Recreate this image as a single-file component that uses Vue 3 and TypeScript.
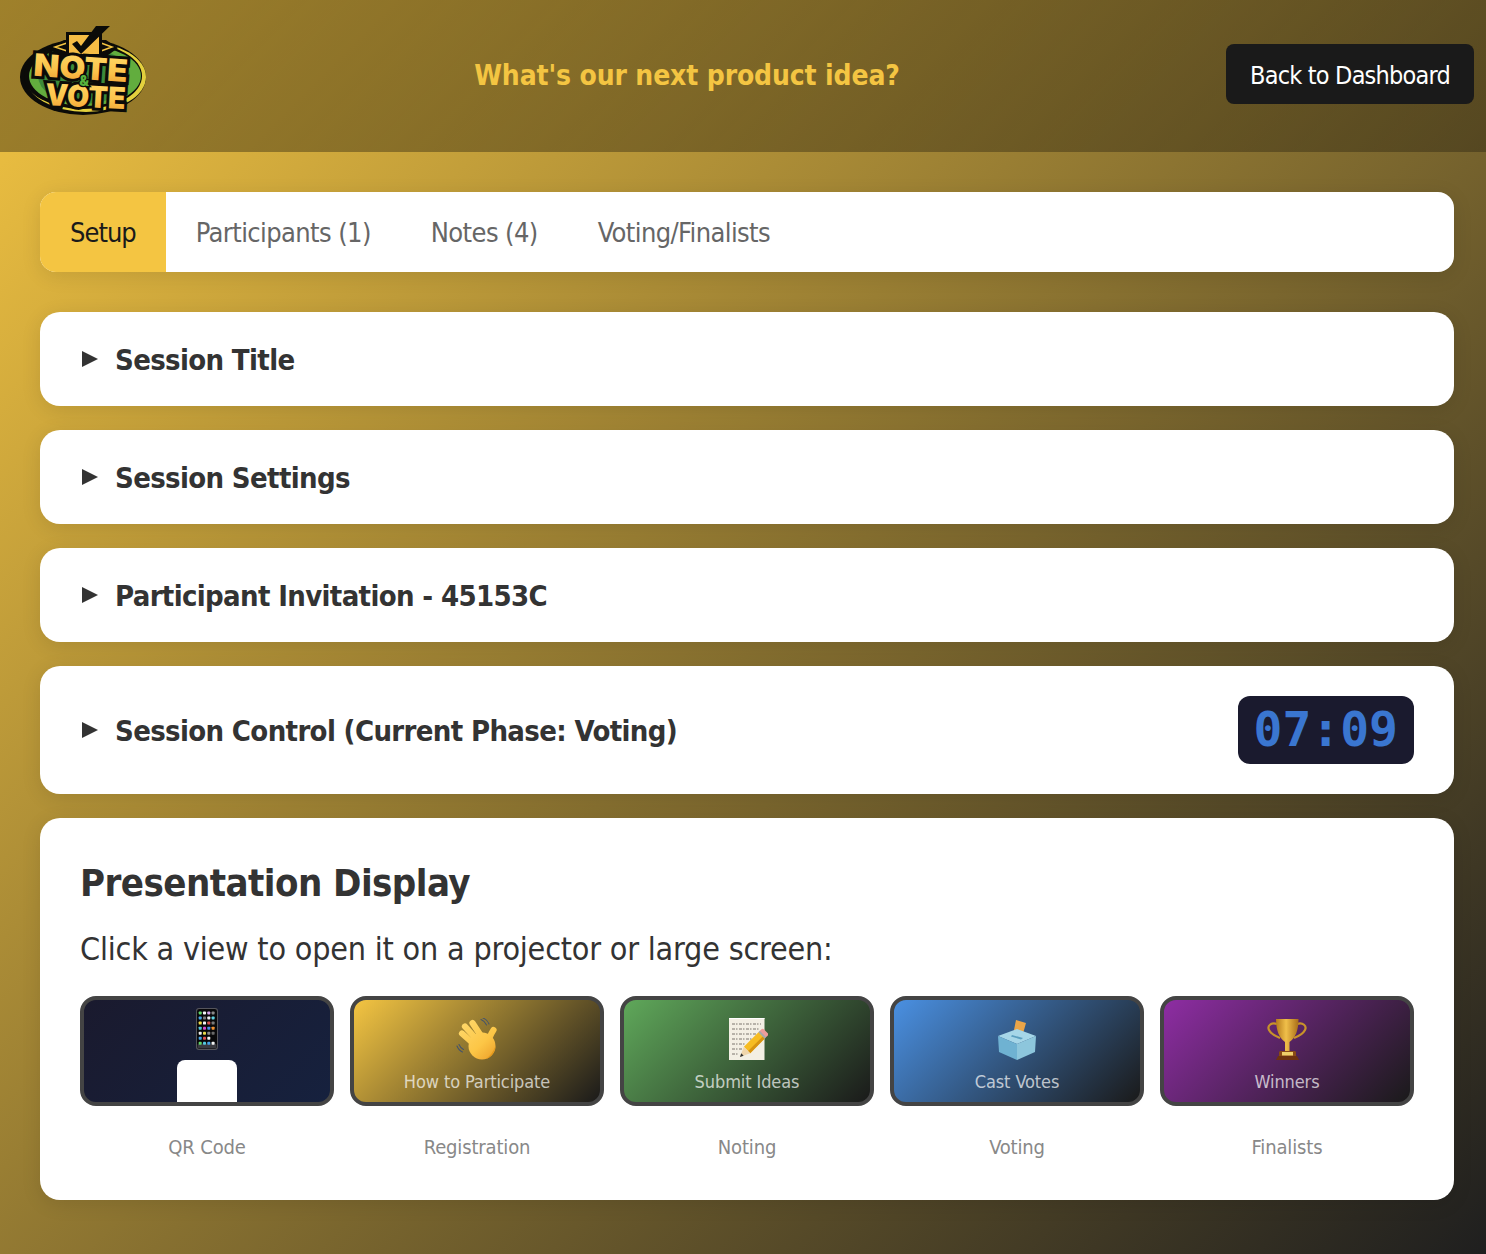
<template>
  <div class="page">
    <header class="topbar">
      <svg class="logo" viewBox="0 0 128 90" width="128" height="90" aria-label="Note and Vote">
        <defs>
          <linearGradient id="gold" x1="0" y1="0" x2="0" y2="1">
            <stop offset="0" stop-color="#ffdc6a" />
            <stop offset="0.6" stop-color="#fbc24a" />
            <stop offset="1" stop-color="#ee9a30" />
          </linearGradient>
        </defs>
        <ellipse cx="63" cy="51" rx="63" ry="38" fill="#0b0b08" />
        <ellipse cx="66" cy="51" rx="60" ry="35" fill="#e3d03d" />
        <ellipse cx="63" cy="50" rx="59" ry="33" fill="#0b0b08" />
        <ellipse cx="65" cy="50" rx="56" ry="30" fill="#62ad3e" />
        <ellipse cx="64" cy="50" rx="46" ry="28" fill="#3c8a3a" />
        <path d="M28 22 L44 14 L86 14 L98 22 L84 32 L42 32 Z" fill="#0b0b08" />
        <path d="M47 17 L35 21 L47 25 M81 17 L92 21 L81 25" fill="none" stroke="#f4c542" stroke-width="1.500" />
        <rect x="46" y="6" width="36" height="22" fill="#0b0b08" />
        <rect x="49" y="9" width="30" height="19" fill="#f6bd45" />
        <path d="M52 18 L57 15 L61 20 L76 0 L90 0 L61 28 Z" fill="#0b0b08" />
        <g font-family="Inter, 'DejaVu Sans', sans-serif" font-weight="900" text-anchor="middle" paint-order="stroke" stroke="#0b0b08" stroke-linejoin="miter">
          <text x="60" y="53" font-size="31" textLength="94" lengthAdjust="spacingAndGlyphs" fill="url(#gold)" stroke-width="6" transform="rotate(4 60 53)">NOTE</text>
          <text x="65" y="81" font-size="30" textLength="80" lengthAdjust="spacingAndGlyphs" fill="url(#gold)" stroke-width="6" transform="rotate(3 65 81)">VOTE</text>
          <text x="64" y="60" font-size="14" fill="#56b23c" stroke-width="2.500">&amp;</text>
        </g>
      </svg>
      <h1 class="session-name">What's our next product idea?</h1>
      <button class="back-btn">Back to Dashboard</button>
    </header>

    <main class="content">
      <nav class="tabs">
        <button
          v-for="(tab, i) in tabs"
          :key="tab"
          class="tab"
          :class="{ active: i === 0 }"
        >
          {{ tab }}
        </button>
      </nav>

      <div class="stack">
        <details v-for="s in sections" :key="s" class="card">
          <summary class="card-head"><span class="arrow"></span><h3>{{ s }}</h3></summary>
        </details>

        <details class="card">
          <summary class="card-head control">
            <span class="arrow"></span>
            <h3>Session Control (Current Phase: Voting)</h3>
            <span class="timer">07:09</span>
          </summary>
        </details>

        <section class="card display">
          <h2>Presentation Display</h2>
          <p>Click a view to open it on a projector or large screen:</p>
          <div class="views">
            <div v-for="v in views" :key="v.phase" class="view">
              <div class="thumb" :class="v.kind">
                <svg v-if="v.kind === 'qr'" class="emoji" viewBox="0 0 42 42">
                  <rect x="10" y="0" width="22" height="42" rx="3" fill="#55555c" />
                  <rect x="11" y="1" width="20" height="40" rx="2.400" fill="#08080a" />
                  <rect x="11.500" y="35.500" width="19" height="5" rx="1.500" fill="#3a3a40" />
                  <rect
                    v-for="(c, n) in phoneCells"
                    :key="n"
                    :x="c.x"
                    :y="c.y"
                    width="3"
                    height="3"
                    rx="0.700"
                    :fill="c.fill"
                  />
                </svg>
                <svg v-else-if="v.kind === 'hand'" class="emoji" viewBox="0 0 42 42">
                  <defs>
                    <linearGradient id="skin" gradientUnits="userSpaceOnUse" x1="6" y1="6" x2="38" y2="40">
                      <stop offset="0" stop-color="#ffd768" />
                      <stop offset="0.6" stop-color="#fcc646" />
                      <stop offset="1" stop-color="#eda22c" />
                    </linearGradient>
                  </defs>
                  <path d="M25 1.500c2.500 1 4.500 3 5.500 5.500M27 0c2.500 1 5 3 6 6M1 28c1 2.500 3 5 5.500 6M3 26.500c1 2.500 2.500 4 4.500 5" fill="none" stroke="#46546a" stroke-width="1.100" stroke-linecap="round" />
                  <g stroke="url(#skin)" stroke-width="6.200" stroke-linecap="round" fill="none">
                    <path d="M6 15.500 L19 27" />
                    <path d="M9 8.500 L22 23" />
                    <path d="M16.500 5 L27 21" />
                    <path d="M30 27 C33 22 34 17 37.500 12" />
                  </g>
                  <circle cx="26" cy="28" r="13.500" fill="url(#skin)" />
                  <path d="M30 41 C35 39.500 39 35 39.500 28 C37 34 34 38 30 41 Z" fill="#e59a1c" />
                </svg>
                <svg v-else-if="v.kind === 'memo'" class="emoji" viewBox="0 0 42 42">
                  <rect x="3" y="0" width="35.500" height="42" fill="#f3efe4" />
                  <path d="M3 0h35.500v1H3z" fill="#fff" />
                  <g fill="none" stroke="#5a574f" stroke-width="0.800" stroke-dasharray="3 1 1.500 1.500">
                    <path d="M6 6h29M6 11h27M6 16h24M6 21h20M6 26h13M6 31h10M6 36h7" />
                  </g>
                  <g transform="rotate(45 26 27)">
                    <rect x="21.500" y="13" width="9" height="21" fill="#f6bc22" />
                    <rect x="27.500" y="13" width="3" height="21" fill="#d79412" />
                    <rect x="21.500" y="7.500" width="9" height="5.500" rx="2" fill="#ee9c9a" />
                    <rect x="21.500" y="11.500" width="9" height="2" fill="#a9a9a9" />
                    <path d="M21.500 34 H30.500 L26 44 Z" fill="#f0d6ac" />
                    <path d="M24.300 40.500 H27.700 L26 44 Z" fill="#333" />
                  </g>
                </svg>
                <svg v-else-if="v.kind === 'ballot'" class="emoji" viewBox="0 0 42 42">
                  <path d="M20 2 L30 5 L26 19 L17 17 Z" fill="#eba548" />
                  <path d="M21 11 L40 18 L21 26 L2 18 Z" fill="#a6d6e8" />
                  <path d="M2 18 L21 26 V42 L3 34 Z" fill="#6fb2d2" />
                  <path d="M40 18 L21 26 V42 L39 34 Z" fill="#8dc6dc" />
                  <path d="M16 17 L27 20 L25 21.500 L15 18.500 Z" fill="#5b9fc0" />
                </svg>
                <svg v-else class="emoji" viewBox="0 0 42 42">
                  <defs>
                    <linearGradient id="cup" x1="0" y1="0" x2="1" y2="0">
                      <stop offset="0" stop-color="#b57a1c" />
                      <stop offset="0.45" stop-color="#f0bf4a" />
                      <stop offset="1" stop-color="#a96d18" />
                    </linearGradient>
                  </defs>
                  <path d="M11 6C5 4 1 8 3 12c2 4 6 6 11 8M31 6c6-2 10 2 8 6-2 4-6 6-11 8" fill="none" stroke="#c8922a" stroke-width="2.200" />
                  <path d="M10 1h22.500c0 11-3 19-9 23v9h-4.500v-9C13 20 10 12 10 1z" fill="url(#cup)" />
                  <path d="M14 33h15l1 1v4H13v-4z" fill="#8a4a16" />
                  <rect x="16" y="34" width="11" height="3.500" fill="#f0cf6a" />
                  <path d="M12 38h19l2 4H10z" fill="#6e3210" />
                </svg>
                <div v-if="v.kind === 'qr'" class="qr-box"></div>
                <span v-else class="thumb-label">{{ v.label }}</span>
              </div>
              <div class="phase">{{ v.phase }}</div>
            </div>
          </div>
        </section>
      </div>
    </main>
  </div>
</template>

<script setup lang="ts">
const tabs = ["Setup", "Participants (1)", "Notes (4)", "Voting/Finalists"];

const sections = ["Session Title", "Session Settings", "Participant Invitation - 45153C"];

const views = [
  { kind: "qr", label: "", phase: "QR Code" },
  { kind: "hand", label: "How to Participate", phase: "Registration" },
  { kind: "memo", label: "Submit Ideas", phase: "Noting" },
  { kind: "ballot", label: "Cast Votes", phase: "Voting" },
  { kind: "trophy", label: "Winners", phase: "Finalists" },
];

// app grid on the phone emoji, row by row, last row is the dock
const cellRows = [
  ["#62d66a", "#f2f2f2", "#d6a4ec", "#8a8a8a"],
  ["#45a5ea", "#777777", "#eeeeee", "#5bd0e0"],
  ["#f2dc4c", "#f2f2f2", "#d85050", "#7a7a7a"],
  ["#54c8e0", "#d846c8", "#4a8fe8", "#f09030"],
  ["#eeeeee", "#e8d84a", "#8a8a8a", "#6a6a6a"],
  ["#45a5ea", "#e05050", "#f2f2f2", "#08080a"],
  ["#62d66a", "#54c8e0", "#45a5ea", "#f2f2f2"],
];
const phoneCells = cellRows.flatMap((row, r) =>
  row.map((fill, c) => ({ x: 12.700 + c * 4.300, y: 3.500 + r * 5.050, fill })),
);
</script>

<style>
html,
body {
  margin: 0;
}
</style>

<style scoped>
.page {
  min-height: 1254px;
  background: linear-gradient(135deg, #f4c542 0%, #1f1f1f 100%);
  font-family: "DejaVu Sans Condensed", "DejaVu Sans", sans-serif;
  font-stretch: condensed;
  color: #333;
}

.topbar {
  height: 152px;
  box-sizing: border-box;
  padding: 0 12px 4px 20px;
  display: flex;
  align-items: center;
  justify-content: space-between;
  background: linear-gradient(135deg, rgba(0, 0, 0, 0.35), rgba(0, 0, 0, 0.27));
}

.logo {
  display: block;
  margin-top: -6px;
  overflow: visible;
}

.session-name {
  margin: 3px 0 0;
  font-size: 28px;
  letter-spacing: -0.14px;
  font-weight: 700;
  color: #f4c542;
}

.back-btn {
  width: 248px;
  height: 60px;
  padding: 2px 0 0;
  border: 0;
  border-radius: 8px;
  background: #1a1a1a;
  color: #fff;
  font: inherit;
  font-size: 25px;
  letter-spacing: -0.8px;
}

.content {
  padding: 40px 32px 40px 40px;
}

.tabs {
  display: flex;
  height: 80px;
  margin-bottom: 40px;
  background: #fff;
  border-radius: 16px;
  overflow: hidden;
  box-shadow: 0 4px 20px rgba(0, 0, 0, 0.1);
}

.tab {
  padding: 0 30px;
  border: 0;
  background: none;
  color: #666;
  font: inherit;
  font-size: 27px;
  letter-spacing: -0.6px;
}

.tab.active {
  background: #f4c542;
  color: #1a1a1a;
  letter-spacing: -1px;
}

.stack {
  display: flex;
  flex-direction: column;
  gap: 24px;
}

.card {
  background: #fff;
  border-radius: 20px;
  box-shadow: 0 4px 20px rgba(0, 0, 0, 0.1);
}

.card-head {
  display: flex;
  align-items: center;
  height: 94px;
  padding: 0 40px;
  list-style: none;
}

.card-head.control {
  height: 128px;
}

.arrow {
  width: 0;
  height: 0;
  margin: 0 17px 0 2px;
  border-style: solid;
  border-width: 8px 0 8px 16px;
  border-color: transparent transparent transparent #333;
}

.card-head h3 {
  margin: 2px 0 0;
  font-size: 29px;
  letter-spacing: -0.65px;
  font-weight: 700;
  color: #333;
}

.timer {
  margin-left: auto;
  padding: 0 16px;
  height: 68px;
  line-height: 66px;
  border-radius: 12px;
  background: #1a1a2e;
  color: #3a76d0;
  font-family: "DejaVu Sans Mono", monospace;
  font-stretch: normal;
  font-size: 48px;
  font-weight: 700;
}

.display {
  padding: 40px;
}

.display h2 {
  margin: 1px 0 0;
  font-size: 38px;
  letter-spacing: -0.55px;
  line-height: 48px;
  font-weight: 700;
  color: #333;
}

.display p {
  margin: 22px 0 27px;
  font-size: 32px;
  letter-spacing: -0.2px;
  line-height: 40px;
}

.views {
  display: grid;
  grid-template-columns: repeat(5, 1fr);
  gap: 16px;
}

.thumb {
  height: 110px;
  box-sizing: border-box;
  border: 4px solid #444;
  border-radius: 16px;
  overflow: hidden;
  display: flex;
  flex-direction: column;
  align-items: center;
  padding-top: 18px;
}

.thumb.qr {
  padding-top: 8px;
  background: linear-gradient(135deg, #1a1a2e, #16213e);
}

.thumb.hand {
  background: linear-gradient(135deg, #f4c542, #1a1a1a);
}

.thumb.memo {
  background: linear-gradient(135deg, #5fa85a, #1a1a1a);
}

.thumb.ballot {
  background: linear-gradient(135deg, #4a90e2, #1a1a1a);
}

.thumb.trophy {
  background: linear-gradient(135deg, #8e2da3, #1a1a1a);
}

.emoji {
  width: 42px;
  height: 42px;
  flex: none;
}

.qr-box {
  width: 60px;
  height: 60px;
  flex: none;
  margin-top: 10px;
  background: #fff;
  border-radius: 8px;
}

.thumb-label {
  margin-top: 11px;
  font-size: 18px;
  letter-spacing: -0.1px;
  line-height: 22px;
  color: rgba(255, 255, 255, 0.7);
}

.phase {
  margin-top: 28px;
  text-align: center;
  font-size: 20px;
  letter-spacing: -0.15px;
  line-height: 26px;
  color: #888;
}
</style>
